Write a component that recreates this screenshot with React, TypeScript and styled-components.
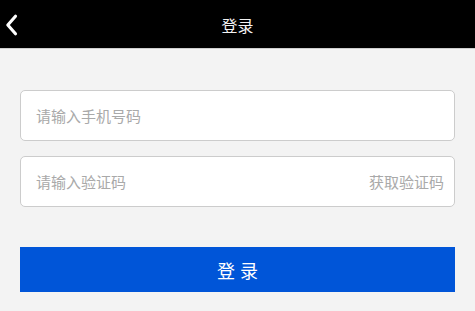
import styled, { createGlobalStyle } from "styled-components"

const GlobalStyle = createGlobalStyle`
  html, body {
    margin: 0;
    padding: 0;
    background: #f3f3f3;
    font-family: "Noto Sans CJK SC", "Noto Sans", sans-serif;
  }
`

const Page = styled.div`
  width: 100%;
  min-height: 311px;
  background: #f3f3f3;
`

const Header = styled.header`
  position: relative;
  height: 48px;
  background: #000;
  border-bottom: 1px solid #cfcfcf;
  display: flex;
  align-items: center;
  justify-content: center;
`

const BackButton = styled.button`
  position: absolute;
  left: 0;
  top: 0;
  height: 48px;
  padding: 2px 0 0 4px;
  border: none;
  background: transparent;
  display: flex;
  align-items: center;
`

const Title = styled.h1`
  margin: 0;
  padding-top: 2px;
  color: #f2f2f2;
  font-size: 16px;
  font-weight: 400;
  line-height: 1;
`

const Form = styled.div`
  padding: 41px 20px 0;
  display: flex;
  flex-direction: column;
`

const Field = styled.div<{ $gap?: number }>`
  height: 51px;
  box-sizing: border-box;
  border: 1px solid #cccccc;
  border-radius: 5px;
  background: #fff;
  display: flex;
  align-items: center;
  padding: 0 10px 0 15px;
  margin-bottom: ${(p) => p.$gap ?? 0}px;
`

const Input = styled.input`
  flex: 1;
  min-width: 0;
  border: none;
  outline: none;
  background: transparent;
  font-family: inherit;
  font-size: 15px;
  color: #333;
  padding: 0;

  &::placeholder {
    color: #a9a9a9;
  }
`

const CodeLink = styled.span`
  font-size: 15px;
  color: #a9a9a9;
  white-space: nowrap;
`

const Submit = styled.button`
  margin-top: 40px;
  height: 45px;
  border: none;
  background: #0055d8;
  color: #fff;
  font-family: inherit;
  font-size: 18px;
  letter-spacing: 5px;
  text-indent: 5px;
`

const App = () => {
  return (
    <Page>
      <GlobalStyle />
      <Header>
        <BackButton>
          <svg width="14" height="22" viewBox="0 0 14 22">
            <path
              d="M11.5 2.2 L3.8 11 L11.5 19.8"
              fill="none"
              stroke="#fff"
              strokeWidth="3.1"
              strokeLinecap="round"
              strokeLinejoin="round"
            />
          </svg>
        </BackButton>
        <Title>登录</Title>
      </Header>
      <Form>
        <Field $gap={15}>
          <Input placeholder="请输入手机号码" />
        </Field>
        <Field>
          <Input placeholder="请输入验证码" />
          <CodeLink>获取验证码</CodeLink>
        </Field>
        <Submit>登录</Submit>
      </Form>
    </Page>
  )
}

export default App
